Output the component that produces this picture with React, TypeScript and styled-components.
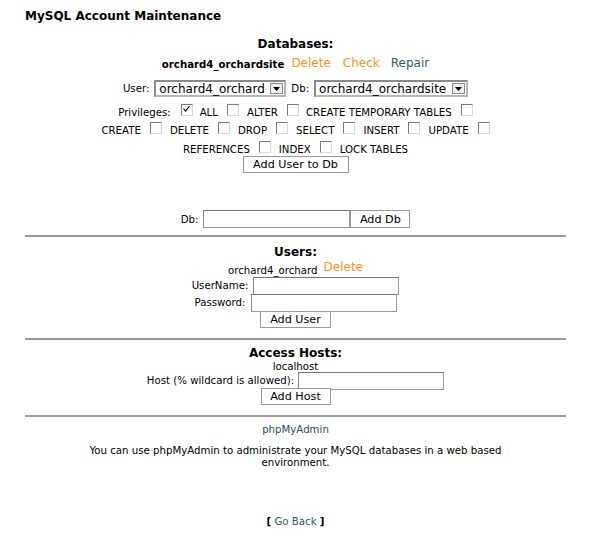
import React from "react";
import styled, { createGlobalStyle } from "styled-components";

const Global = createGlobalStyle`
  html, body { margin: 0; padding: 0; background: #fff; }
  body { font-family: "DejaVu Sans", Verdana, sans-serif; color: #000; }
`;

const Page = styled.div`
  width: 541px;
  padding: 8px 0 0 25px;
  font-size: 10.2px;
`;

const Title = styled.div`
  font-weight: bold;
  font-size: 12px;
  line-height: 16px;
  height: 16px;
`;

const Heading = styled.div<{ $mt: number }>`
  margin-top: ${(p) => p.$mt}px;
  text-align: center;
  font-weight: bold;
  font-size: 12px;
  line-height: 14px;
`;

const Row = styled.div<{ $mt?: number; $h?: number; $gap?: number }>`
  display: flex;
  justify-content: center;
  align-items: center;
  gap: ${(p) => p.$gap ?? 5}px;
  margin-top: ${(p) => p.$mt ?? 0}px;
  height: ${(p) => p.$h ?? 17}px;
  white-space: nowrap;
`;

const Bold = styled.span`
  font-weight: bold;
`;

const ActionLink = styled.a<{ $color: string; $ml?: number; $top?: number }>`
  color: ${(p) => p.$color};
  font-size: 12px;
  text-decoration: none;
  position: relative;
  top: ${(p) => p.$top ?? -2}px;
  margin-left: ${(p) => p.$ml ?? 7}px;
`;

const Select = styled.div<{ $w: number }>`
  width: ${(p) => p.$w}px;
  height: 17px;
  box-sizing: border-box;
  border: 2px solid #8a8a8a;
  border-right-color: #b5b5b5;
  border-bottom-color: #b5b5b5;
  display: flex;
  align-items: center;
  justify-content: space-between;
  padding-left: 3px;
  font-size: 12px;
  background: #fff;
`;

const Arrow = styled.div`
  width: 13px;
  height: 11px;
  margin-right: 1px;
  border: 1px solid #888;
  box-sizing: border-box;
  background: #eee;
  display: flex;
  align-items: center;
  justify-content: center;
`;

const PrivLine = styled.div<{ $mt: number }>`
  margin-top: ${(p) => p.$mt}px;
  display: flex;
  justify-content: center;
  align-items: flex-end;
  height: 18px;
  white-space: nowrap;
  line-height: 13px;
`;

const Label = styled.span<{ $ml?: number; $mr?: number }>`
  margin: 0 ${(p) => p.$mr ?? 9}px 0 ${(p) => p.$ml ?? 8}px;
`;

const Box = styled.span`
  display: inline-flex;
  align-items: flex-start;
  justify-content: flex-start;
  width: 12px;
  height: 12px;
  box-sizing: border-box;
  border-top: 1px solid #7a7a7a;
  border-left: 1px solid #7a7a7a;
  border-right: 1px solid #d8d8d8;
  border-bottom: 1px solid #d8d8d8;
  margin-bottom: 3px;
  background: #fff;
`;

const Button = styled.div<{ $w: number; $h?: number }>`
  width: ${(p) => p.$w}px;
  height: ${(p) => p.$h ?? 17}px;
  box-sizing: border-box;
  border: 1px solid #999;
  display: flex;
  align-items: center;
  justify-content: center;
  font-size: 11.2px;
  background: #fff;
`;

const Input = styled.div<{ $w: number }>`
  width: ${(p) => p.$w}px;
  height: 18px;
  box-sizing: border-box;
  border: 1px solid #999;
  border-top-color: #777;
  border-left-color: #888;
  background: #fff;
`;

const Rule = styled.div<{ $mt: number }>`
  margin-top: ${(p) => p.$mt}px;
  height: 2px;
  background: #999;
`;

const Center = styled.div<{ $mt: number; $color?: string }>`
  margin-top: ${(p) => p.$mt}px;
  text-align: center;
  line-height: 12px;
  color: ${(p) => p.$color ?? "#000"};
`;

const Para = styled.div<{ $mt: number }>`
  margin: ${(p) => p.$mt}px auto 0;
  width: 440px;
  text-align: center;
  line-height: 12px;
`;

const BackLink = styled.a`
  color: #2b5b6b;
  text-decoration: none;
  font-weight: normal;
`;

const Brack = styled.span`
  font-weight: bold;
`;

const Shifted = styled.span`
  position: relative;
  top: 2px;
`;

const Check = () => (
  <svg width="10" height="8" viewBox="0 0 10 8">
    <path d="M1.5 3.5 L3.5 6 L7.5 1" stroke="#000" strokeWidth="1.2" fill="none" />
  </svg>
);

const Cb = ({ checked }: { checked?: boolean }) => <Box>{checked && <Check />}</Box>;

const Caret = () => (
  <svg width="7" height="4" viewBox="0 0 7 4">
    <path d="M0 0 L7 0 L3.5 4 Z" fill="#000" />
  </svg>
);

export default function App() {
  return (
    <Page>
      <Global />
      <Title>MySQL Account Maintenance</Title>
      <Heading $mt={13}>Databases:</Heading>
      <Row $mt={5} $h={17} $gap={0}>
        <Bold>orchard4_orchardsite</Bold>
        <ActionLink $color="#f7941d" href="#">Delete</ActionLink>
        <ActionLink $color="#f7941d" href="#" $ml={12}>Check</ActionLink>
        <ActionLink $color="#2b5b6b" href="#" $ml={11}>Repair</ActionLink>
      </Row>
      <Row $mt={7} $h={17}>
        <span>User:</span>
        <Select $w={132}>
          <span>orchard4_orchard</span>
          <Arrow><Caret /></Arrow>
        </Select>
        <span>Db:</span>
        <Select $w={154}>
          <span>orchard4_orchardsite</span>
          <Arrow><Caret /></Arrow>
        </Select>
      </Row>
      <PrivLine $mt={4}>
        <Label $ml={0} $mr={10}>Privileges:</Label>
        <Cb checked />
        <Label $ml={7}>ALL</Label>
        <Cb />
        <Label>ALTER</Label>
        <Cb />
        <Label $ml={7}>CREATE TEMPORARY TABLES</Label>
        <Cb />
      </PrivLine>
      <PrivLine $mt={0}>
        <Label $ml={0}>CREATE</Label>
        <Cb />
        <Label>DELETE</Label>
        <Cb />
        <Label>DROP</Label>
        <Cb />
        <Label>SELECT</Label>
        <Cb />
        <Label>INSERT</Label>
        <Cb />
        <Label>UPDATE</Label>
        <Cb />
      </PrivLine>
      <PrivLine $mt={1}>
        <Label $ml={0}>REFERENCES</Label>
        <Cb />
        <Label>INDEX</Label>
        <Cb />
        <Label $mr={0}>LOCK TABLES</Label>
      </PrivLine>
      <Row $mt={0} $h={17}>
        <Button $w={106}>Add User to Db</Button>
      </Row>
      <Row $mt={37} $h={18} $gap={0}>
        <Label $ml={0} $mr={5}>Db:</Label>
        <Input $w={147} />
        <Button $w={60} $h={18}>Add Db</Button>
      </Row>
      <Rule $mt={7} />
      <Heading $mt={8}>Users:</Heading>
      <Row $mt={1} $h={16} $gap={6}>
        <Shifted>orchard4_orchard</Shifted>
        <ActionLink $color="#f7941d" href="#" $ml={0} $top={-1}>Delete</ActionLink>
      </Row>
      <Row $mt={1} $h={17}>
        <span>UserName:</span>
        <Input $w={146} />
      </Row>
      <Row $mt={0} $h={17}>
        <span>Password:</span>
        <Input $w={146} />
      </Row>
      <Row $mt={0} $h={17}>
        <Button $w={71}>Add User</Button>
      </Row>
      <Rule $mt={10} />
      <Heading $mt={6}>Access Hosts:</Heading>
      <Center $mt={1}>localhost</Center>
      <Row $mt={-1} $h={17} $gap={4}>
        <span>Host (% wildcard is allowed):</span>
        <Input $w={146} />
      </Row>
      <Row $mt={-1} $h={17}>
        <Button $w={70}>Add Host</Button>
      </Row>
      <Rule $mt={10} />
      <Center $mt={7} $color="#2b4b5b">phpMyAdmin</Center>
      <Para $mt={9}>
        You can use phpMyAdmin to administrate your MySQL databases in a web based environment.
      </Para>
      <Center $mt={47}>
        <Brack>[</Brack> <BackLink href="#">Go Back</BackLink> <Brack>]</Brack>
      </Center>
    </Page>
  );
}
